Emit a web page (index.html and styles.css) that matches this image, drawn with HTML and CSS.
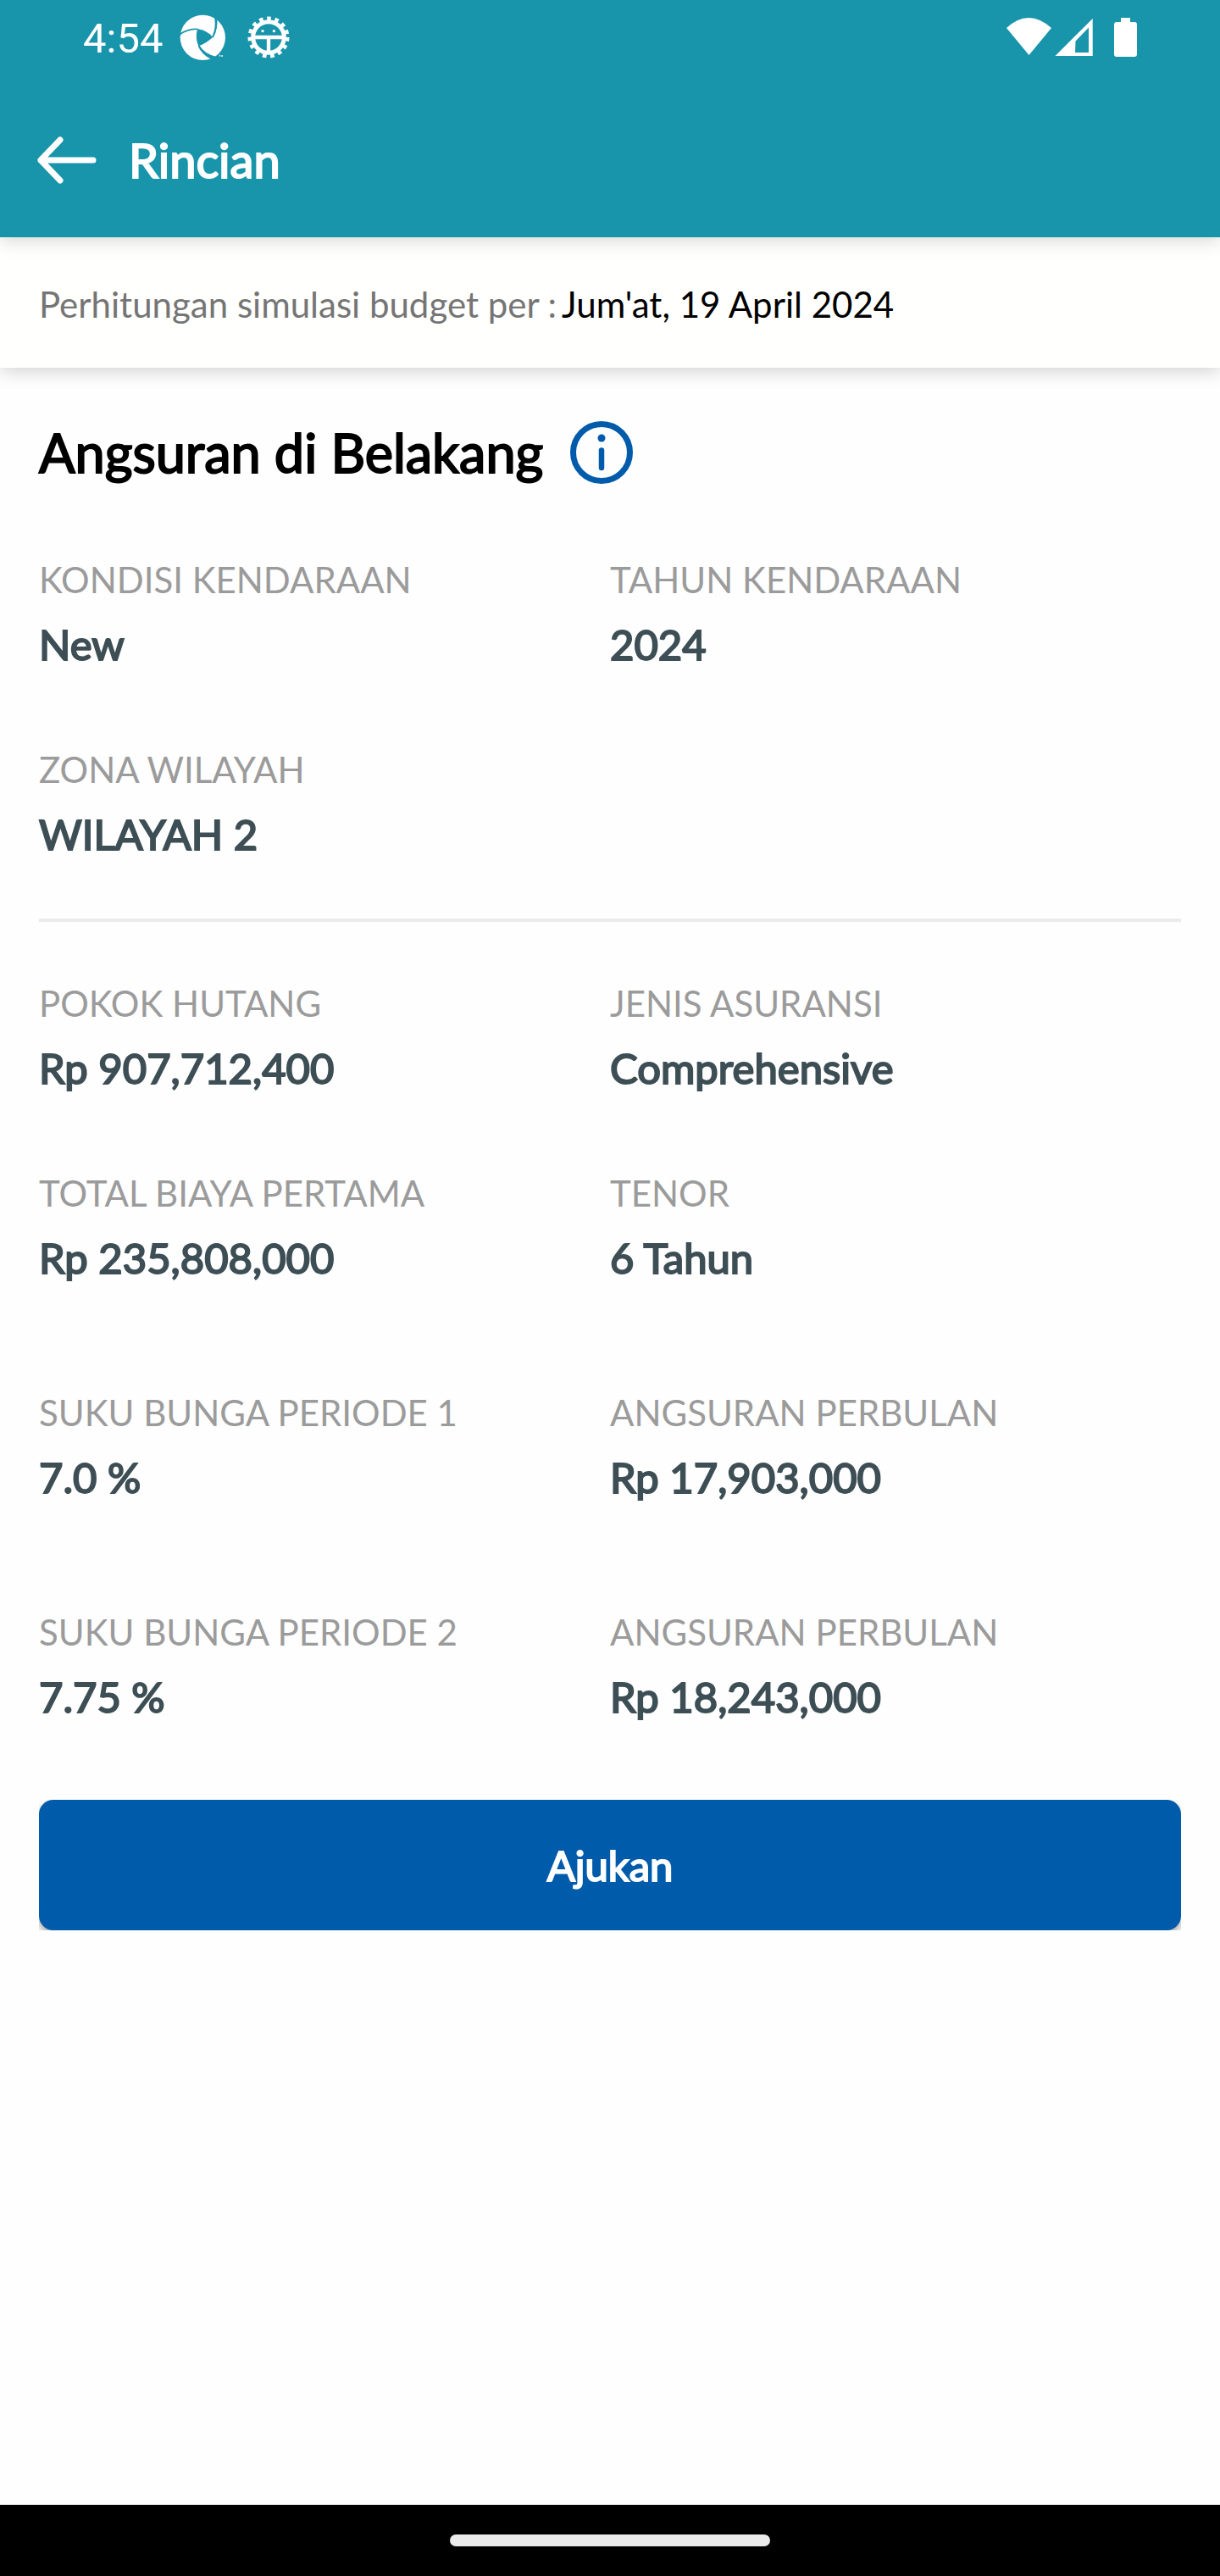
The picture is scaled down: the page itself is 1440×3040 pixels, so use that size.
FILE: index.html
```html
<!DOCTYPE html>
<html lang="id">
<head>
  <meta charset="utf-8">
  <meta name="viewport" content="width=device-width, initial-scale=1">
  <title>Rincian</title>
  <link rel="stylesheet" href="styles.css">
</head>
<body>
  <div class="statusbar">
    <div class="status-left">
      <time class="clock">4:54</time>
      <svg class="icon-aperture" viewBox="396 51 162 162" aria-hidden="true">
        <circle cx="478" cy="133" r="80" fill="#fff"/>
        <path d="M459 102 Q492 107 514 131 Q491 153 463 163 Q450 135 459 102Z" fill="#1995ab"/>
        <g fill="#1995ab">
          <path d="M395 119 Q428 98 462 101 L460 105 Q424 104 397 125Z"/>
          <path d="M519 60 L529 70 Q532 103 515 134 L511 129 Q526 98 519 60Z"/>
          <path d="M466 160 Q484 192 525 200 L508 210 Q474 194 461 163Z"/>
        </g>
        <path d="M536 196h5M538 196v5M544 201v-5l2 3 2-3v5" stroke="#fff" stroke-width="2" fill="none"/>
      </svg>
      <svg class="icon-gear" viewBox="635 57 150 150" aria-hidden="true">
        <circle cx="710" cy="132" r="55" fill="none" stroke="#fff" stroke-width="15"/>
        <circle cx="710" cy="132" r="66" fill="none" stroke="#fff" stroke-width="15" stroke-dasharray="13.8 13.8"/>
        <path d="M661 132h98M710 132v52" stroke="#fff" stroke-width="13" fill="none"/>
        <circle cx="689" cy="110" r="5" fill="#fff"/>
        <circle cx="729" cy="110" r="5" fill="#fff"/>
      </svg>
    </div>
    <svg class="icon-system" viewBox="0 0 154 46" aria-hidden="true">
      <path d="M0 12 Q26 -12 53 12 L26.500 44Z" fill="#fff"/>
      <path fill-rule="evenodd" d="M57.500 45 L101.700 1 V45Z M81 41 H97 V11.500 L81.500 27.500Z" fill="#fff"/>
      <path d="M135 0h11v5h5q3 0 3 3v35q0 3-3 3h-21q-3 0-3-3V8q0-3 3-3h5z" fill="#fff"/>
    </svg>
  </div>

  <header class="appbar">
    <button class="back" type="button" aria-label="Kembali">
      <svg viewBox="0 0 70 56" aria-hidden="true">
        <path d="M27 4 L4 28 L27 52 M4 28 H66" fill="none" stroke="#fff" stroke-width="7" stroke-linecap="round" stroke-linejoin="round"/>
      </svg>
    </button>
    <h1 class="title">Rincian</h1>
  </header>

  <div class="datebar">
    <span class="datebar-label">Perhitungan simulasi budget per :</span>
    <span class="datebar-value">Jum'at, 19 April 2024</span>
  </div>

  <main class="content">
    <div class="heading">
      <h2 class="heading-text">Angsuran di Belakang</h2>
      <button class="info" type="button" aria-label="Informasi">
        <svg viewBox="0 0 74 74" aria-hidden="true">
          <circle cx="37" cy="37" r="33.500" fill="none" stroke="#005bab" stroke-width="7"/>
          <circle cx="37" cy="20" r="4.500" fill="#005bab"/>
          <path d="M37 34.500V55" stroke="#005bab" stroke-width="6.500" stroke-linecap="round"/>
        </svg>
      </button>
    </div>

    <dl class="details">
      <div class="item"><dt>KONDISI KENDARAAN</dt><dd>New</dd></div>
      <div class="item"><dt>TAHUN KENDARAAN</dt><dd>2024</dd></div>
      <div class="item"><dt>ZONA WILAYAH</dt><dd>WILAYAH 2</dd></div>
    </dl>

    <hr class="divider">

    <dl class="details">
      <div class="item"><dt>POKOK HUTANG</dt><dd>Rp 907,712,400</dd></div>
      <div class="item"><dt>JENIS ASURANSI</dt><dd>Comprehensive</dd></div>
      <div class="item"><dt>TOTAL BIAYA PERTAMA</dt><dd>Rp 235,808,000</dd></div>
      <div class="item"><dt>TENOR</dt><dd>6 Tahun</dd></div>
    </dl>

    <dl class="details details-period">
      <div class="item"><dt>SUKU BUNGA PERIODE 1</dt><dd>7.0 %</dd></div>
      <div class="item"><dt>ANGSURAN PERBULAN</dt><dd>Rp 17,903,000</dd></div>
      <div class="item"><dt>SUKU BUNGA PERIODE 2</dt><dd>7.75 %</dd></div>
      <div class="item"><dt>ANGSURAN PERBULAN</dt><dd>Rp 18,243,000</dd></div>
    </dl>

    <div class="action">
      <button class="submit" type="button">Ajukan</button>
    </div>
  </main>

  <footer class="navbar"><div class="handle"></div></footer>
</body>
</html>
```
FILE: styles.css
```css
* {
  box-sizing: border-box;
}

body {
  margin: 0;
  min-height: 100vh;
  display: flex;
  flex-direction: column;
  background: #fefefe;
  color: #000;
  font-family: Lato, sans-serif;
  font-size: 42px;
  line-height: 50px;
}

h1, h2, dl, dd {
  margin: 0;
}

button {
  padding: 0;
  border: 0;
  background: none;
  font: inherit;
  cursor: pointer;
}

svg {
  display: block;
}

.title, .heading-text, dd, .submit {
  font-weight: 400;
  -webkit-text-stroke: 2px currentColor;
}

.statusbar {
  position: relative;
  z-index: 3;
  display: flex;
  justify-content: space-between;
  align-items: center;
  height: 88px;
  padding: 0 98px;
  background: #1995ab;
  color: #fff;
}

.status-left {
  display: flex;
  align-items: center;
}

.clock {
  padding-top: 4px;
  font-family: Roboto, sans-serif;
  font-size: 49px;
  line-height: 56px;
  margin-right: 20px;
}

.icon-aperture {
  width: 54px;
  height: 54px;
}

.icon-gear {
  width: 50px;
  height: 50px;
  margin-left: 26px;
}

.icon-system {
  width: 154px;
  height: 46px;
}

.appbar {
  position: relative;
  z-index: 2;
  display: flex;
  align-items: center;
  gap: 38px;
  height: 192px;
  padding: 10px 44px 0;
  background: #1995ab;
  color: #fff;
  box-shadow: 0 4px 20px rgba(0, 0, 0, 0.16);
}

.back svg {
  width: 70px;
  height: 56px;
}

.title {
  font-size: 56px;
  line-height: 68px;
}

.datebar {
  position: relative;
  z-index: 1;
  display: flex;
  flex-wrap: wrap;
  gap: 6px;
  padding: 54px 46px 50px;
  background: #fffffd;
  box-shadow: 0 4px 20px rgba(0, 0, 0, 0.18);
}

.datebar-label {
  color: #757575;
}

.content {
  flex: 1;
  padding: 62px 46px;
}

.heading {
  display: flex;
  align-items: center;
  gap: 32px;
  margin-bottom: 87px;
}

.heading-text {
  font-size: 63px;
  line-height: 76px;
}

.info svg {
  width: 74px;
  height: 74px;
}

.details {
  display: grid;
  grid-template-columns: 1fr 1fr;
  row-gap: 93px;
}

.item {
  display: flex;
  flex-direction: column;
  gap: 21px;
}

dt {
  color: #9b9b9b;
}

dd {
  color: #3d4e55;
  font-size: 49px;
  line-height: 60px;
}

.divider {
  height: 4px;
  margin: 70px 0 71px;
  border: 0;
  background: #ebebeb;
}

.details-period {
  margin-top: 128px;
  row-gap: 128px;
}

.action {
  margin-top: 92px;
  overflow: hidden;
}

.submit {
  display: block;
  width: 100%;
  padding: 47px 0;
  border-radius: 17px;
  background: #005bab;
  color: #fff;
  font-size: 49px;
  line-height: 60px;
  box-shadow: 0 5px 8px rgba(0, 0, 0, 0.35);
}

.navbar {
  display: flex;
  justify-content: center;
  align-items: center;
  height: 84px;
  background: #000;
}

.handle {
  width: 378px;
  height: 14px;
  border-radius: 7px;
  background: #ebebeb;
}
```
